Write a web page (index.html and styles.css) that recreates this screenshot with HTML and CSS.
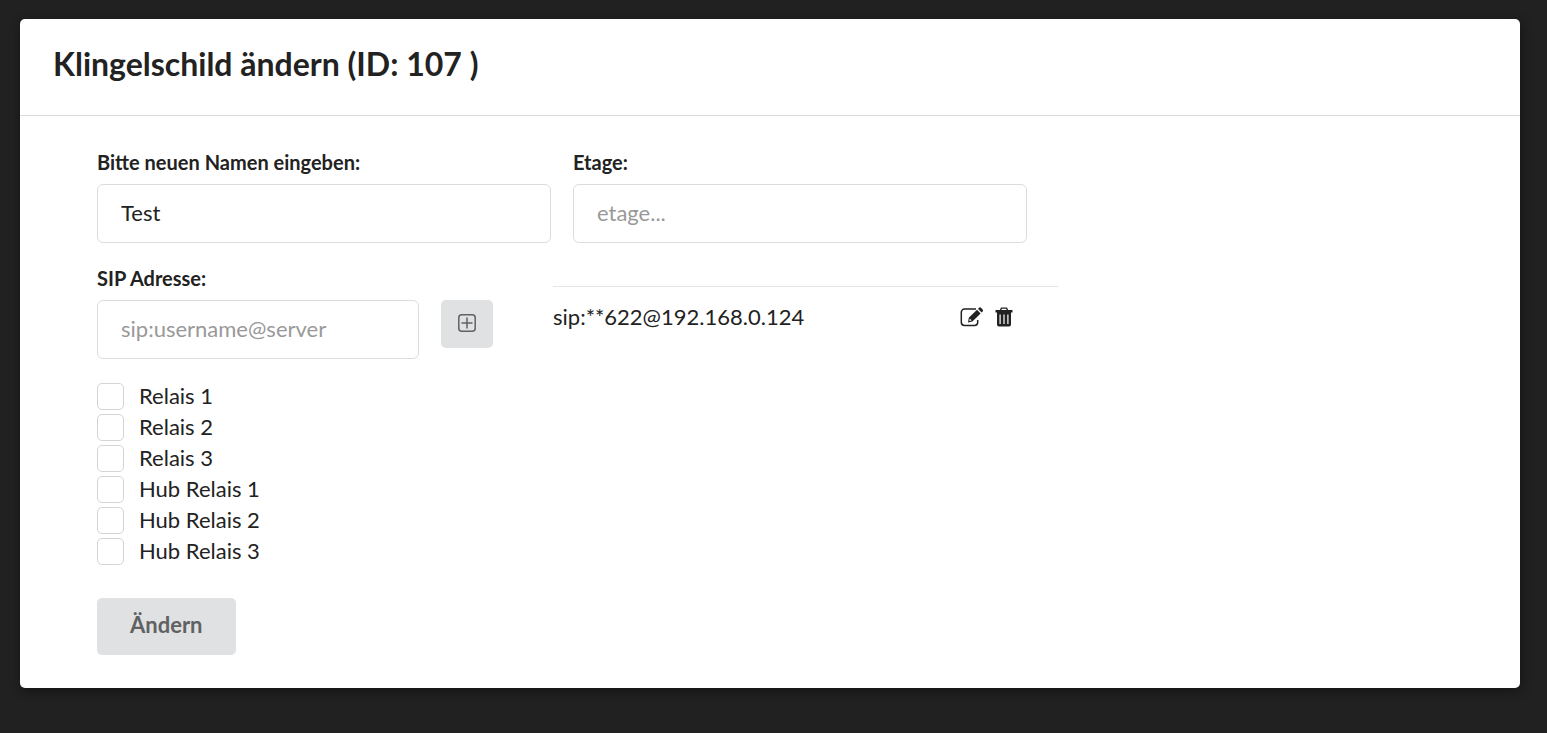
FILE: index.html
```html
<!DOCTYPE html>
<html lang="de">
<head>
<meta charset="utf-8">
<meta name="viewport" content="width=device-width, initial-scale=1">
<title>Klingelschild ändern</title>
<link rel="stylesheet" href="styles.css">
</head>
<body>
<main class="modal">
  <header class="header"><h1 class="title">Klingelschild ändern (ID: 107 )</h1></header>
  <form class="content">
    <div class="row">
      <div class="field name"><label for="name">Bitte neuen Namen eingeben:</label><input id="name" type="text" value="Test"></div>
      <div class="field name"><label for="etage">Etage:</label><input id="etage" type="text" placeholder="etage..."></div>
    </div>
    <div class="row sip-row">
      <div class="field sip"><label for="sip">SIP Adresse:</label><input id="sip" type="text" placeholder="sip:username@server"></div>
      <button class="add" type="button" aria-label="Hinzufügen">
        <svg width="18" height="18" viewBox="0 0 18 18" fill="none" stroke="currentColor" stroke-width="1.5"><rect x=".8" y=".8" width="16.4" height="16.4" rx="3"/><path d="M9 3.500v11M3.500 9h11"/></svg>
      </button>
      <div class="entry">
        <span class="address">sip:**622@192.168.0.124</span>
        <button class="icon" type="button" aria-label="Bearbeiten"><svg width="24" height="20" viewBox="0 0 24 20"><path d="M16 2H4.500A3.200 3.200 0 0 0 1.300 5.200v10A3.200 3.200 0 0 0 4.500 18.400H14.500a3.200 3.200 0 0 0 3.200-3.200V13" fill="none" stroke="currentColor" stroke-width="1.500"/><path fill="currentColor" fill-rule="evenodd" d="M8.800 10.800 17 2.800l3.600 3.600-8.200 8.200L8 15.500zM9.800 11.600l-.5 2.400 2.300-.5zM18 1.800l1-1q1-.9 2 0L22.600 2.400q.9 1 0 2l-1 1z"/></svg></button>
        <button class="icon" type="button" aria-label="Löschen"><svg width="18" height="20" viewBox="0 0 18 20"><path fill="currentColor" fill-rule="evenodd" d="M6 .5h6l1.200 2.500H17.500v2.500H.5V3h4.300zM6.900 1.800 6.300 3h5.400l-.6-1.200zM2 5.500h14v12q0 2-2 2H4q-2 0-2-2zM4.500 7.500v9.500h1.200V7.500zm3.900 0v9.500h1.200V7.500zm3.900 0v9.500h1.200V7.500z"/></svg></button>
      </div>
    </div>
    <div class="checks">
      <label class="check"><input type="checkbox"><span>Relais 1</span></label>
      <label class="check"><input type="checkbox"><span>Relais 2</span></label>
      <label class="check"><input type="checkbox"><span>Relais 3</span></label>
      <label class="check"><input type="checkbox"><span>Hub Relais 1</span></label>
      <label class="check"><input type="checkbox"><span>Hub Relais 2</span></label>
      <label class="check"><input type="checkbox"><span>Hub Relais 3</span></label>
    </div>
    <button class="submit" type="submit">Ändern</button>
  </form>
</main>
</body>
</html>
```
FILE: styles.css
```css
* { box-sizing: border-box; }
body { margin: 0; padding: 19px 27px 45px 20px; background: #212121; color: #222; font: 22px/31px Lato, sans-serif; }
.modal { background: #fff; border-radius: 5px; box-shadow: 1px 3px 12px rgba(0, 0, 0, .4); }
.header { padding: 22px 33px 29px; border-bottom: 1px solid #dcdcdd; }
.title { margin: 0; font-size: 32px; line-height: 45px; font-weight: 700; }
.content { padding: 31px 77px 33px; }
.row { display: flex; gap: 22px; align-items: flex-start; }
.field { display: flex; flex-direction: column; gap: 7px; min-width: 0; }
.field label { font-size: 20px; line-height: 30px; font-weight: 700; }
.field input { width: 100%; height: 59px; padding: 0 22px 2px 23px; border: 1px solid #dcdcdd; border-radius: 6px; background: #fff; color: #222; font: inherit; }
.field input::placeholder { color: #999; opacity: 1; }
.name { flex: 0 1 454px; }
.sip-row { margin-top: 20px; }
.sip { flex: 0 1 322px; }
.add { width: 52px; height: 48px; margin-top: 37px; padding: 0 0 2px; border: 0; border-radius: 5px; background: #e0e1e2; color: #606162; display: grid; place-items: center; }
.entry { flex: 0 1 505px; margin: 23px 0 0 38px; padding: 14px 45px 0 0; border-top: 1px solid #e5e5e5; display: flex; align-items: center; gap: 11px; }
.address { flex: 1; }
.icon { padding: 0; border: 0; background: none; color: #222; display: flex; }
.checks { margin-top: 22px; display: flex; flex-direction: column; align-items: flex-start; }
.check { display: flex; align-items: center; gap: 15px; height: 31px; }
.check span { padding-bottom: 2px; }
.check input { appearance: none; width: 27px; height: 27px; margin: 0; border: 1px solid #d4d4d5; border-radius: 5px; background: #fff; }
.submit { margin-top: 31px; padding: 11px 33px 15px; border: 0; border-radius: 5px; background: #e0e1e2; color: #606162; font: 700 22px/31px Lato, sans-serif; }
```
